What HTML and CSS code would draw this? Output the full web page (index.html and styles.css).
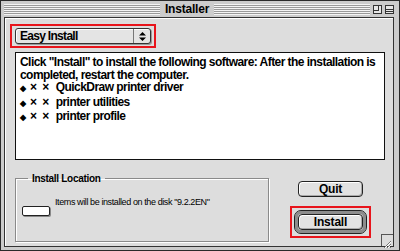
FILE: index.html
```html
<!DOCTYPE html>
<html lang="en">
<head>
    <meta charset="UTF-8">
    <title>Installer</title>
    <link rel="stylesheet" href="styles.css">
</head>
<body>
<div class="window">
    <div class="titlebar">
        <div class="stripes"></div>
        <div class="title">Installer</div>
        <div class="stripes"></div>
        <div class="widget zoom"><span></span></div>
        <div class="widget collapse"><span></span></div>
    </div>
    <div class="content">
        <div class="mark popup-mark">
            <div class="popup">
                <span class="popup-label">Easy Install</span>
                <span class="popup-arrows">
                    <svg width="7" height="9" viewBox="0 0 7 9"><path d="M3.5 0L7 3.5H0z M3.5 9L0 5.5H7z" fill="#000"/></svg>
                </span>
            </div>
        </div>
        <div class="readme">
            <div>Click "Install" to install the following software: After the installation is</div>
            <div>completed, restart the computer.</div>
            <div><span class="bullet">◆</span><span class="marks">× ×</span>QuickDraw printer driver</div>
            <div><span class="bullet">◆</span><span class="marks">× ×</span>printer utilities</div>
            <div><span class="bullet">◆</span><span class="marks">× ×</span>printer profile</div>
        </div>
        <div class="bottom">
            <fieldset class="location">
                <legend>Install Location</legend>
                <div class="disk"></div>
                <div class="location-text">Items will be installed on the disk "9.2.2EN"</div>
            </fieldset>
            <div class="buttons">
                <button class="btn quit">Quit</button>
                <div class="mark install-mark">
                    <div class="default-ring"><button class="btn">Install</button></div>
                </div>
            </div>
        </div>
        <div class="grow">
            <svg width="10" height="10" viewBox="0 0 10 10">
                <path d="M2 9L9 2 M5 9L9 5 M8 9L9 8" stroke="#777" stroke-width="1"/>
                <path d="M3 9L9 3 M6 9L9 6" stroke="#fff" stroke-width="1"/>
            </svg>
        </div>
    </div>
</div>
</body>
</html>
```

FILE: styles.css
```css
body {
    margin: 0;
    font-family: "Liberation Sans", Arial, sans-serif;
}
.window {
    position: relative;
    width: 400px;
    height: 251px;
    box-sizing: border-box;
    border: 1px solid #2a2a2a;
    background: #cccccc;
    padding: 0 5px 3px 3px;
    display: flex;
    flex-direction: column;
}
.titlebar {
    height: 16px;
    display: flex;
    align-items: center;
    gap: 3px;
}
.stripes {
    flex: 1;
    height: 11px;
    background: repeating-linear-gradient(#f4f4f4 0 1px, #9a9a9a 1px 2px);
}
.title {
    font-weight: bold;
    font-size: 12px;
    letter-spacing: -0.2px;
    padding: 0 2px;
    line-height: 16px;
}
.widget {
    width: 9px;
    height: 9px;
    border: 1px solid #333;
    background: #e6e6e6;
    box-sizing: border-box;
}
.zoom span {
    display: block;
    width: 5px;
    height: 5px;
    border-right: 1px solid #333;
    border-bottom: 1px solid #333;
    box-sizing: border-box;
}
.collapse span {
    display: block;
    margin-top: 3px;
    height: 1px;
    border-top: 1px solid #333;
    border-bottom: 1px solid #333;
}
.content {
    position: relative;
    flex: 1;
    border: 1px solid #333;
    background: #dddddd;
    box-shadow: inset 1px 1px 0 #fff;
    padding: 6px 0 0 5px;
}
.mark {
    border: 2px solid #e8141b;
    box-sizing: border-box;
}
.popup-mark {
    width: 146px;
    height: 24px;
    padding: 2px 3px;
}
.popup {
    height: 16px;
    box-sizing: border-box;
    border: 1px solid #333;
    border-radius: 3px;
    background: #e4e4e4;
    box-shadow: inset 1px 1px 0 #fff, 1px 1px 0 #999;
    display: flex;
    align-items: center;
}
.popup-label {
    flex: 1;
    font-weight: bold;
    font-size: 12px;
    letter-spacing: -0.7px;
    padding-left: 4px;
}
.popup-arrows {
    width: 16px;
    height: 14px;
    border-left: 1px solid #777;
    display: flex;
    align-items: center;
    justify-content: center;
}
.readme {
    margin: 4px 0 0 5px;
    width: 370px;
    height: 108px;
    box-sizing: border-box;
    border: 1px solid #111;
    background: #fff;
    padding: 3px 4px;
    font-weight: bold;
    font-size: 12px;
    line-height: 12.5px;
    letter-spacing: -0.55px;
    color: #000;
}
.bullet {
    font-size: 8px;
    letter-spacing: 0;
}
.marks {
    margin: 0 7px 0 4px;
    word-spacing: 3px;
}
.bottom {
    display: flex;
    align-items: flex-start;
    margin: 13px 0 0 5px;
}
.location {
    margin: 0;
    width: 254px;
    height: 69px;
    box-sizing: border-box;
    border: 1px solid #8a8a8a;
    box-shadow: 1px 1px 0 #fff, inset 1px 1px 0 #fff;
    padding: 8px 0 0 6px;
    display: flex;
    align-items: flex-start;
    gap: 5px;
}
.location legend {
    font-weight: bold;
    font-size: 10px;
    letter-spacing: -0.3px;
    padding: 0 4px;
    margin-left: 6px;
}
.disk {
    width: 26px;
    height: 8px;
    margin-top: 14px;
    border: 1px solid #222;
    border-radius: 2px;
    background: #fff;
    box-shadow: 1px 1px 0 #888;
}
.location-text {
    font-size: 9px;
    letter-spacing: -0.4px;
    margin-top: 5px;
}
.buttons {
    margin-left: 21px;
    display: flex;
    flex-direction: column;
    align-items: center;
    gap: 9px;
    padding-top: 8px;
}
.btn {
    font-family: "Liberation Sans", Arial, sans-serif;
    font-weight: bold;
    font-size: 12px;
    letter-spacing: -0.2px;
    width: 65px;
    height: 16px;
    padding: 0;
    border: 1px solid #222;
    border-radius: 4px;
    background: #e2e2e2;
    box-shadow: inset 1px 1px 0 #fff, inset -1px -1px 0 #aaa;
    color: #000;
    line-height: 14px;
}
.install-mark {
    width: 81px;
    height: 32px;
    display: flex;
    align-items: center;
    justify-content: center;
}
.default-ring {
    border: 3px solid #8c8c8c;
    outline: 1px solid #222;
    border-radius: 6px;
    display: flex;
}
.grow {
    position: absolute;
    right: 0;
    bottom: 0;
    width: 11px;
    height: 11px;
    border-left: 1px solid #555;
    border-top: 1px solid #555;
    background: #dddddd;
}
```
